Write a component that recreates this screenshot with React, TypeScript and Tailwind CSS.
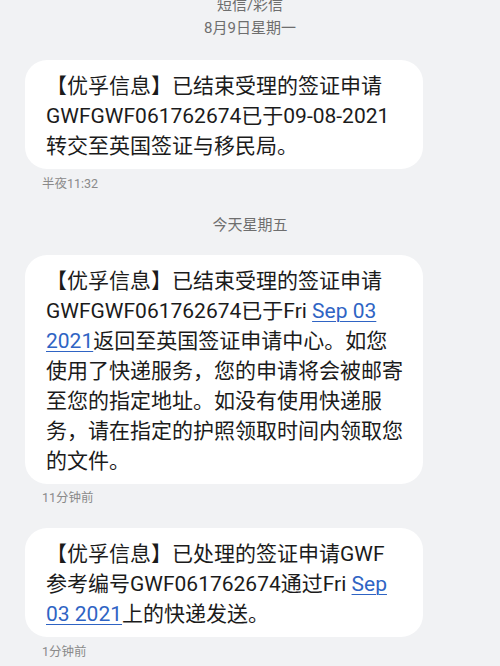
import React from "react";

const font = { fontFamily: 'Roboto, "Noto Sans CJK SC", "Noto Sans", sans-serif' };

function Link({ children }: { children: React.ReactNode }) {
  return <span className="text-[#2f64c4] underline decoration-1 underline-offset-[3px]">{children}</span>;
}

function Bubble({ lines }: { lines: React.ReactNode[] }) {
  return (
    <div className="ml-[25px] w-[398px] rounded-[22px] bg-white pl-[21px] pr-2 pt-[11px] pb-[8px] text-[21px] leading-[30px] text-[#1b1b1b]">
      {lines.map((l, i) => (
        <div key={i} className="whitespace-nowrap">{l}</div>
      ))}
    </div>
  );
}

function Time({ t, mt }: { t: string; mt: string }) {
  return <div className={`ml-[42px] ${mt} text-[12.5px] leading-[16px] text-[#8a8a8a]`}>{t}</div>;
}

function DateLabel({ t }: { t: string }) {
  return <div className="text-center text-[15px] leading-[20px] text-[#6e6e6e]">{t}</div>;
}

export default function App() {
  return (
    <div className="w-[500px] h-[666px] overflow-hidden bg-[#f1f2f4]" style={font}>
      <div className="-mt-[5px]">
        <DateLabel t="短信/彩信" />
        <div className="mt-[3px]"><DateLabel t="8月9日星期一" /></div>
        <div className="mt-[22px]">
          <Bubble
            lines={[
              "【优孚信息】已结束受理的签证申请",
              "GWFGWF061762674已于09-08-2021",
              "转交至英国签证与移民局。",
            ]}
          />
        </div>
        <Time t="半夜11:32" mt="mt-[7px]" />
        <div className="mt-[23px]"><DateLabel t="今天星期五" /></div>
        <div className="mt-[20px]">
          <Bubble
            lines={[
              "【优孚信息】已结束受理的签证申请",
              <>GWFGWF061762674已于Fri <Link>Sep 03</Link></>,
              <><Link>2021</Link>返回至英国签证申请中心。如您</>,
              "使用了快递服务，您的申请将会被邮寄",
              "至您的指定地址。如没有使用快递服",
              "务，请在指定的护照领取时间内领取您",
              "的文件。",
            ]}
          />
        </div>
        <Time t="11分钟前" mt="mt-[6px]" />
        <div className="mt-[22px]">
          <Bubble
            lines={[
              "【优孚信息】已处理的签证申请GWF",
              <>参考编号GWF061762674通过Fri <Link>Sep</Link></>,
              <><Link>03 2021</Link>上的快递发送。</>,
            ]}
          />
        </div>
        <Time t="1分钟前" mt="mt-[7px]" />
      </div>
    </div>
  );
}
